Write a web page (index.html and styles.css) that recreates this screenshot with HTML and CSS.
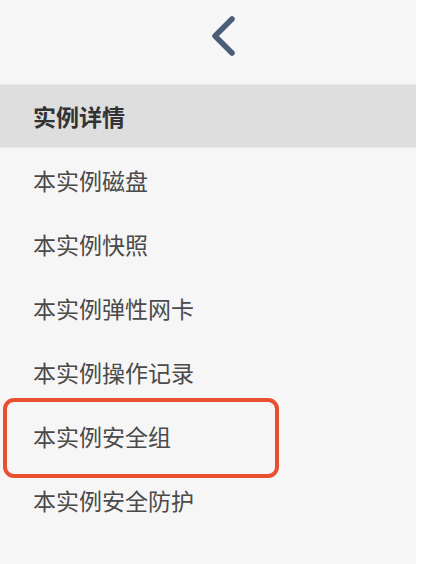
FILE: index.html
```html
<!DOCTYPE html>
<html lang="zh">
<head>
<meta charset="utf-8">
<link rel="stylesheet" href="styles.css">
</head>
<body>
<div class="page">
  <nav class="sidebar">
    <div class="top">
      <svg class="back" width="26" height="40" viewBox="0 0 26 40">
        <polyline points="22,3 5,20 22,37" fill="none" stroke="#4b5d77" stroke-width="5.5" stroke-linecap="round" stroke-linejoin="round"/>
      </svg>
    </div>
    <ul class="menu">
      <li class="item active">实例详情</li>
      <li class="item">本实例磁盘</li>
      <li class="item">本实例快照</li>
      <li class="item">本实例弹性网卡</li>
      <li class="item">本实例操作记录</li>
      <li class="item highlight">本实例安全组</li>
      <li class="item">本实例安全防护</li>
    </ul>
  </nav>
</div>
</body>
</html>
```
FILE: styles.css
```css
html, body {
  margin: 0;
  padding: 0;
  background: #fefefe;
}
.page {
  width: 446px;
  height: 564px;
  display: flex;
}
.sidebar {
  width: 416px;
  height: 564px;
  background: #f6f6f6;
  font-family: "Noto Sans CJK SC", "Noto Sans", sans-serif;
}
.top {
  height: 84px;
  display: flex;
  justify-content: center;
  align-items: flex-start;
  padding-left: 30px;
  box-sizing: border-box;
}
.back {
  margin-top: 16px;
}
.menu {
  list-style: none;
  margin: 0;
  padding: 0;
}
.item {
  height: 64px;
  display: flex;
  align-items: center;
  padding-left: 33px;
  font-size: 23px;
  color: #4a4a4a;
  box-sizing: border-box;
  position: relative;
}
.item.active {
  background: #dedede;
  color: #333;
  font-weight: bold;
  border-top: 1px solid #e8e8e8;
  border-bottom: 1px solid #e8e8e8;
}
.item.highlight::after {
  content: "";
  position: absolute;
  left: 3px;
  top: -6px;
  width: 268px;
  height: 72px;
  border: 4px solid #e8502f;
  border-radius: 11px;
}
```
